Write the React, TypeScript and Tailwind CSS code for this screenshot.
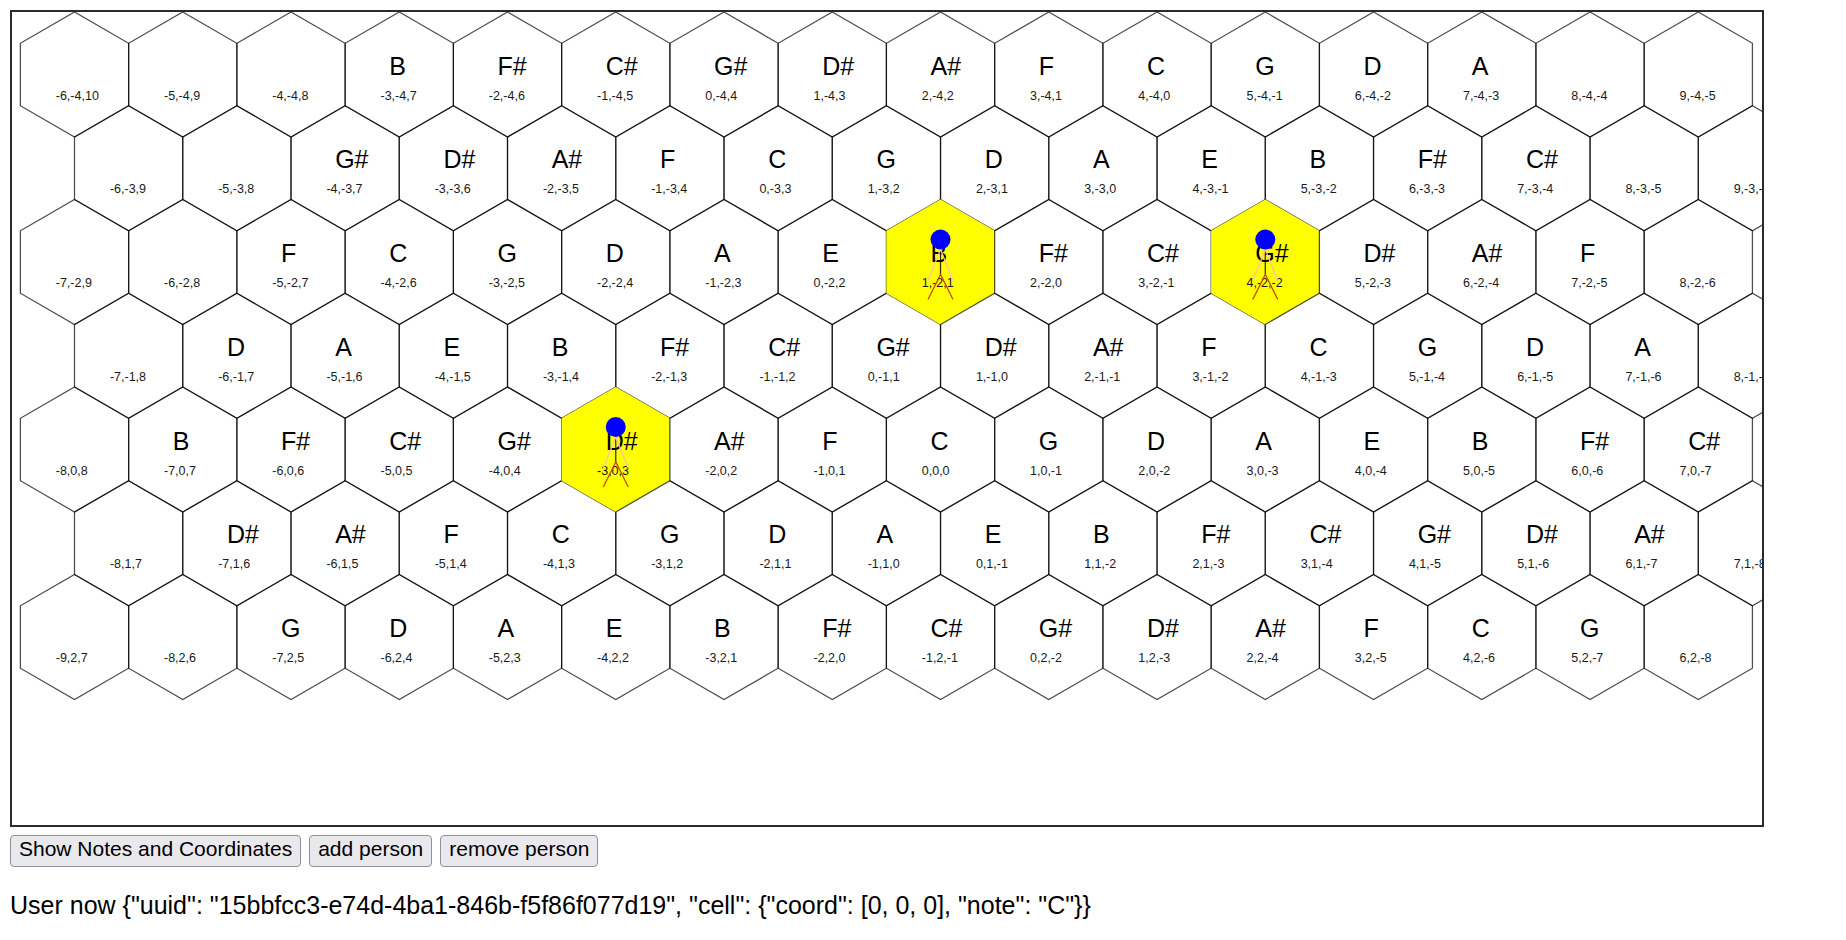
const SIZE = 50;
const HEX_WIDTH = Math.sqrt(3) * SIZE;
const BOARD_WIDTH = 1400;
const BOARD_HEIGHT = 650;

/** Notes of each row from left to right; an empty string is a silent cell. */
const ROWS: { r: number; firstQ: number; notes: string[] }[] = [
  { r: -4, firstQ: -6, notes: ['', '', '', 'B', 'F#', 'C#', 'G#', 'D#', 'A#', 'F', 'C', 'G', 'D', 'A', '', ''] },
  { r: -3, firstQ: -6, notes: ['', '', 'G#', 'D#', 'A#', 'F', 'C', 'G', 'D', 'A', 'E', 'B', 'F#', 'C#', '', ''] },
  { r: -2, firstQ: -7, notes: ['', '', 'F', 'C', 'G', 'D', 'A', 'E', 'B', 'F#', 'C#', 'G#', 'D#', 'A#', 'F', ''] },
  { r: -1, firstQ: -7, notes: ['', 'D', 'A', 'E', 'B', 'F#', 'C#', 'G#', 'D#', 'A#', 'F', 'C', 'G', 'D', 'A', ''] },
  { r: 0, firstQ: -8, notes: ['', 'B', 'F#', 'C#', 'G#', 'D#', 'A#', 'F', 'C', 'G', 'D', 'A', 'E', 'B', 'F#', 'C#'] },
  { r: 1, firstQ: -8, notes: ['', 'D#', 'A#', 'F', 'C', 'G', 'D', 'A', 'E', 'B', 'F#', 'C#', 'G#', 'D#', 'A#', ''] },
  { r: 2, firstQ: -9, notes: ['', '', 'G', 'D', 'A', 'E', 'B', 'F#', 'C#', 'G#', 'D#', 'A#', 'F', 'C', 'G', ''] },
];

const PEOPLE = ['1,-2,1', '4,-2,-2', '-3,0,3'];

/** Cells column by column, so that an occupied cell covers its left and upper neighbours' edges. */
const CELLS = ROWS.flatMap(({ r, firstQ, notes }, row) =>
  notes.map((note, col) => {
    const q = firstQ + col;
    const label = [q, r, -q - r].map((n) => String(n === 0 ? 0 : n)).join(',');
    return {
      label,
      note,
      row,
      col,
      occupied: PEOPLE.includes(label),
      x: SIZE + HEX_WIDTH * (col + (row % 2) / 2),
      y: SIZE + SIZE * 1.5 * row,
    };
  }),
).sort((a, b) => a.col - b.col || a.row - b.row);

function hexPoints(x: number, y: number) {
  const w = HEX_WIDTH / 2;
  const h = SIZE / 2;
  return [
    [x, y - SIZE],
    [x + w, y - h],
    [x + w, y + h],
    [x, y + SIZE],
    [x - w, y + h],
    [x - w, y - h],
  ]
    .map((p) => p.join(','))
    .join(' ');
}

function Person({ x, y }: { x: number; y: number }) {
  return (
    <g transform={`translate(${x} ${y})`} fill="none" strokeWidth="1">
      <path d="M0 -10V10" stroke="#000" strokeOpacity="0.8" />
      <path d="M-10 15L0 -10L10 15" stroke="#ffc0a8" />
      <path d="M-10 30L0 10L10 30" stroke="#c8400f" />
      <circle cy="-18" r="8" fill="#00f" />
    </g>
  );
}

function Board() {
  return (
    <svg
      viewBox={`0 0 ${BOARD_WIDTH} ${BOARD_HEIGHT}`}
      className="block h-auto w-full"
      role="img"
      aria-label="Note board"
    >
      {CELLS.map((c) =>
        c.occupied ? (
          <polygon key={c.label} points={hexPoints(c.x, c.y)} fill="#ff0" />
        ) : (
          <polygon
            key={c.label}
            points={hexPoints(c.x, c.y)}
            fill="none"
            stroke="#000"
            strokeOpacity="0.7"
            strokeWidth="1"
          />
        ),
      )}
      {CELLS.map((c) => (
        <g key={c.label}>
          {c.note && (
            <text x={c.x - 8} y={c.y} fontSize="20" fill="#000">
              {c.note}
            </text>
          )}
          <text x={c.x - 15} y={c.y + 20} fontSize="10" fill="#1a1a1a">
            {c.label}
          </text>
        </g>
      ))}
      {CELLS.filter((c) => c.occupied).map((c) => (
        <Person key={c.label} x={c.x} y={c.y} />
      ))}
    </svg>
  );
}

const BUTTONS = ['Show Notes and Coordinates', 'add person', 'remove person'];

export default function App() {
  const status =
    'User now {"uuid": "15bbfcc3-e74d-4ba1-846b-f5f86f077d19", "cell": {"coord": [0, 0, 0], "note": "C"}}';

  return (
    <main className="bg-white p-2.5 font-['Liberation_Sans',Arial,sans-serif] text-black">
      <div className="max-w-[1754px] border-2 border-[#2a2a2a]">
        <Board />
      </div>
      <div className="mt-2 flex flex-wrap gap-2">
        {BUTTONS.map((label) => (
          <button
            key={label}
            type="button"
            className="h-8 rounded border border-[#8f8f9d] bg-[#e9e9ed] px-2 pb-1 text-[21px] leading-6 hover:bg-[#d0d0d7]"
          >
            {label}
          </button>
        ))}
      </div>
      <p className="mt-6 text-[25px] leading-7">{status}</p>
    </main>
  );
}
